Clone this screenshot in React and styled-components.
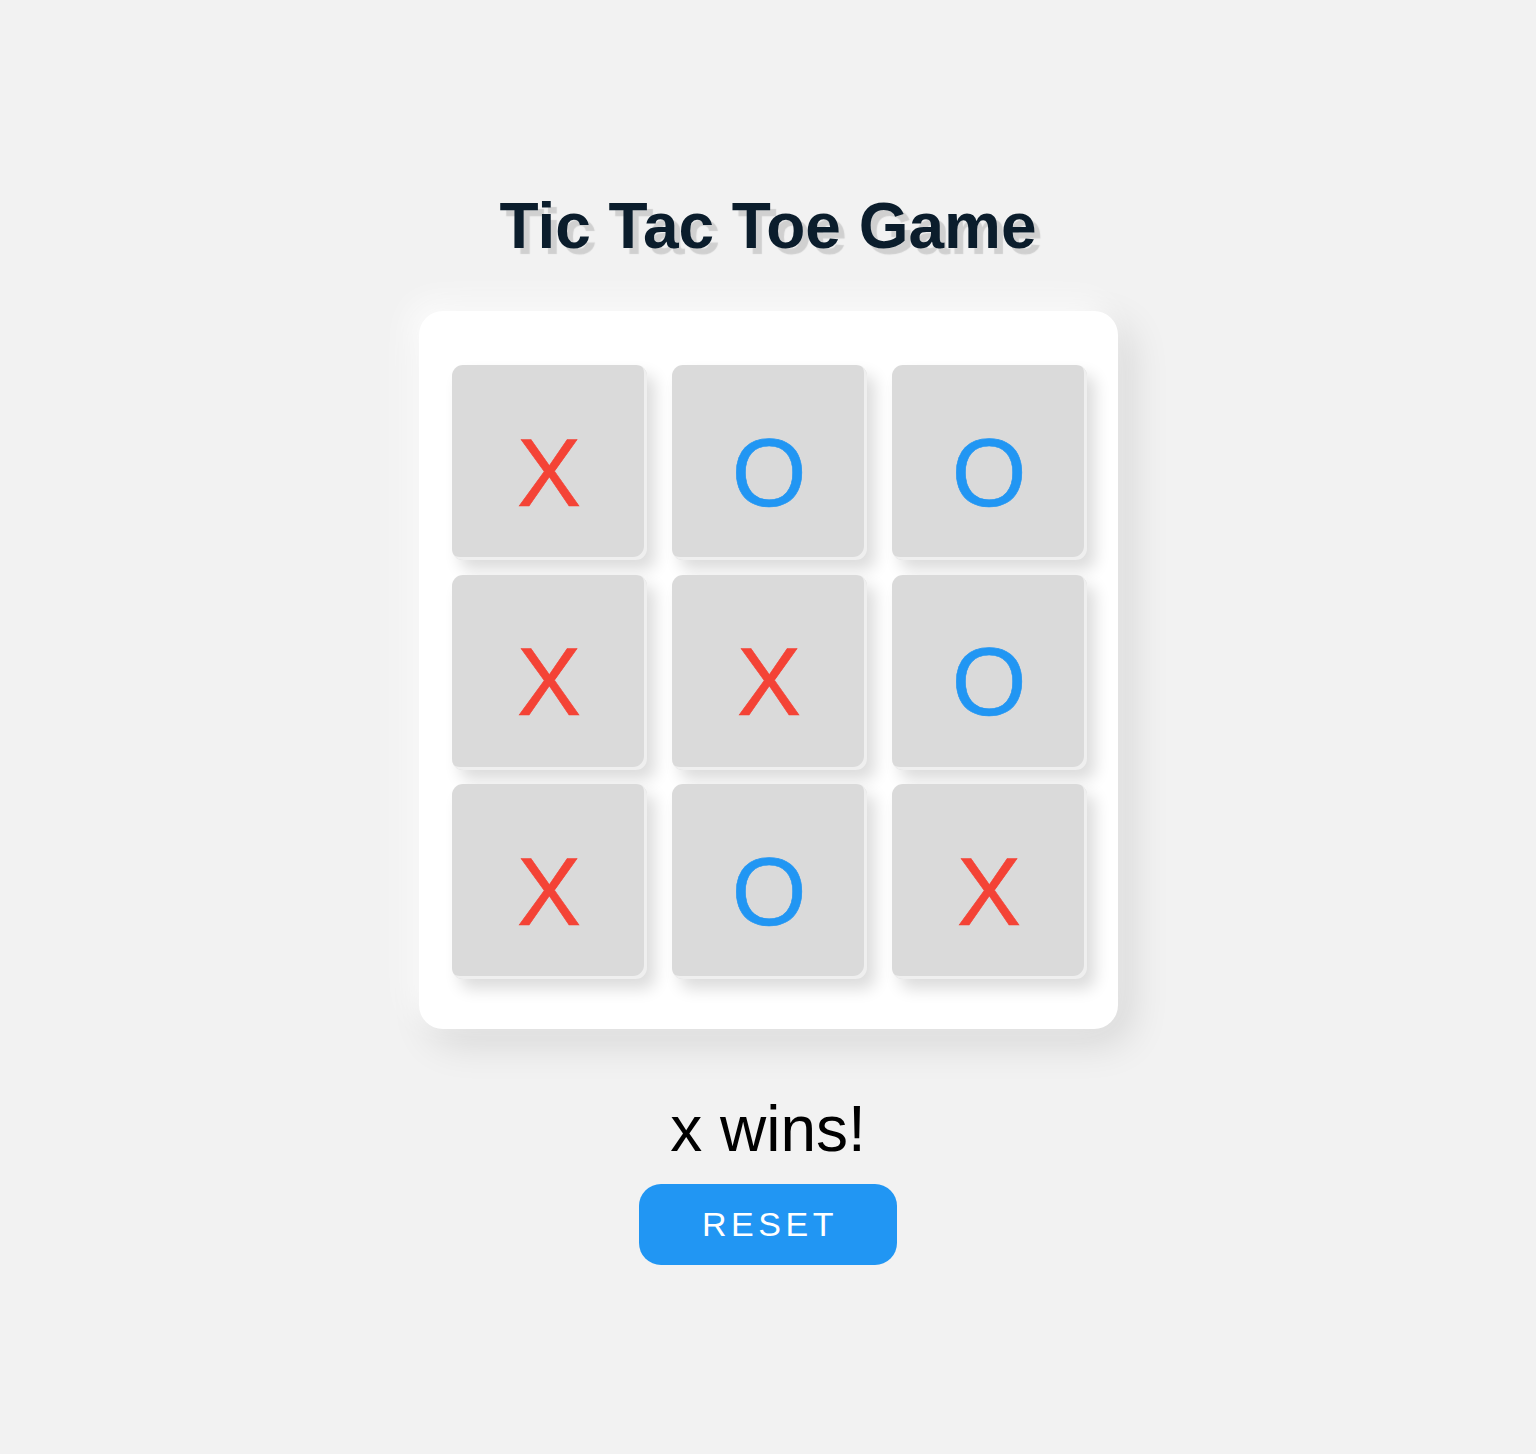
import styled, { createGlobalStyle } from 'styled-components';

const GlobalStyle = createGlobalStyle`
  body {
    margin: 0;
    background: #f2f2f2;
    font-family: "Liberation Sans", Arial, sans-serif;
  }
`

const Page = styled.main`
  display: flex;
  flex-direction: column;
  align-items: center;
  min-height: 1454px;
  padding-top: 189px;
  box-sizing: border-box;
`

const Title = styled.h1`
  margin: 0 0 48px;
  font-size: 64px;
  line-height: 74px;
  font-weight: 700;
  color: #0b1d2c;
  text-shadow: 6px 6px 1px #d0d0d0;
`

const Board = styled.div`
  display: grid;
  grid-template-columns: repeat(3, 195px);
  grid-auto-rows: 195px;
  column-gap: 25px;
  row-gap: 14.5px;
  padding: 54px 31px 50px 33px;
  background: #fff;
  border-radius: 24px;
  box-shadow: -10px -10px 30px rgba(255, 255, 255, 0.8), 12px 14px 40px rgba(0, 0, 0, 0.12);
`

const Cell = styled.button`
  display: flex;
  align-items: center;
  justify-content: center;
  width: 195px;
  height: 195px;
  padding: 20px 0 0;
  box-sizing: border-box;
  border: none;
  border-radius: 11px;
  background: #dadada;
  box-shadow: inset -3px -3px 0 #efefef, 8px 10px 16px rgba(0, 0, 0, 0.14);
  font-family: "Liberation Sans", Arial, sans-serif;
  font-size: 96px;
  line-height: 1;
  color: ${({ $mark }) => ($mark === 'X' ? '#f44336' : '#2196f3')};
  -webkit-text-stroke: 0.6px currentColor;
  cursor: pointer;
`

const Status = styled.p`
  margin: 63px 0 0;
  font-size: 64px;
  line-height: 74px;
  color: #000;
`

const ResetButton = styled.button`
  margin-top: 18px;
  width: 258px;
  height: 81px;
  border: none;
  border-radius: 22px;
  background: #2196f3;
  color: #fff;
  font-family: "Liberation Sans", Arial, sans-serif;
  font-size: 34px;
  letter-spacing: 4.5px;
  padding: 0 0 0 4px;
  cursor: pointer;
`

const board = ['X', 'O', 'O', 'X', 'X', 'O', 'X', 'O', 'X'];

export default function App() {
  return (
    <>
      <GlobalStyle />
      <Page>
        <Title>Tic Tac Toe Game</Title>
        <Board>
          {board.map((mark, i) => (
            <Cell key={i} $mark={mark}>{mark}</Cell>
          ))}
        </Board>
        <Status>x wins!</Status>
        <ResetButton>RESET</ResetButton>
      </Page>
    </>
  );
}
